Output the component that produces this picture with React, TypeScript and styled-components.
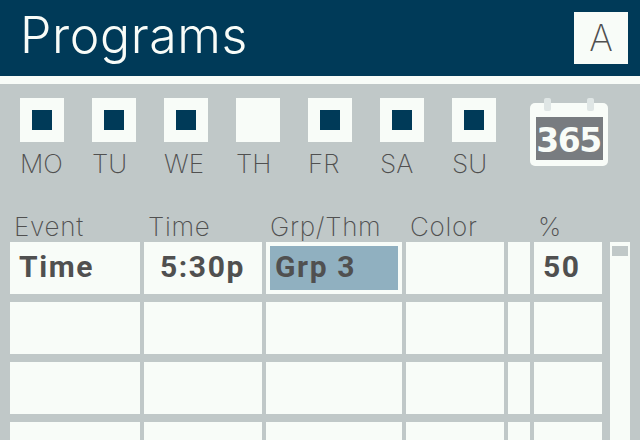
import React from "react";
import styled, { createGlobalStyle } from "styled-components";

const Global = createGlobalStyle`
  html, body { margin: 0; padding: 0; background: #c0c8c8; }
  #root { width: 640px; height: 440px; overflow: hidden; }
  * { box-sizing: border-box; }
`;

const Screen = styled.div`
  width: 640px;
  height: 440px;
  overflow: hidden;
  background: #c0c8c8;
  font-family: Inter, "Liberation Sans", Arial, sans-serif;
  font-weight: 250;
  color: #505050;
`;

const Header = styled.header`
  height: 84px;
  background: #003a58;
  border-bottom: 8px solid #f8fcf8;
  display: flex;
  align-items: flex-start;
  justify-content: space-between;
  padding: 12px 12px 0 20px;
`;

const Title = styled.h1`
  margin: 0;
  font-family: Inter, "Liberation Sans", Arial, sans-serif;
  font-weight: 300;
  font-size: 50px;
  line-height: 47px;
  letter-spacing: 0.6px;
  color: #f8fcf8;
`;

const AccessButton = styled.div`
  width: 54px;
  height: 52px;
  background: #f8fcf8;
  display: flex;
  align-items: center;
  justify-content: center;
  font-size: 36px;
  line-height: 1;
`;

const DaysRow = styled.section`
  display: flex;
  align-items: flex-start;
  padding: 14px 0 0 20px;
  height: 128px;
`;

const Days = styled.div`
  display: flex;
  gap: 28px;
`;

const Day = styled.div`
  width: 44px;
  display: flex;
  flex-direction: column;
  align-items: flex-start;
`;

const Check = styled.div`
  width: 44px;
  height: 44px;
  background: #f8fcf8;
  display: flex;
  align-items: center;
  justify-content: center;
`;

const Mark = styled.div`
  width: 20px;
  height: 20px;
  background: #003a58;
`;

const DayLabel = styled.span`
  font-size: 26px;
  line-height: 26px;
  margin-top: 9px;
  white-space: nowrap;
`;

const CalendarIcon = styled.svg`
  margin-left: 34px;
  flex: none;
`;

const TableArea = styled.section`
  display: flex;
  align-items: flex-start;
  padding-left: 10px;
  gap: 8px;
`;

const TableColumn = styled.div`
  width: 592px;
`;

const COLS = "130px 118px 136px 98px 22px 68px";

const HeadRow = styled.div`
  display: grid;
  grid-template-columns: ${COLS};
  column-gap: 4px;
  height: 30px;
`;

const HeadCell = styled.div<{ $pad: number }>`
  font-size: 26px;
  letter-spacing: 0.7px;
  line-height: 30px;
  padding-left: ${(p) => p.$pad}px;
  white-space: nowrap;
`;

const Row = styled.div`
  display: grid;
  grid-template-columns: ${COLS};
  column-gap: 4px;
  height: 52px;
  margin-bottom: 8px;
`;

const Cell = styled.div<{ $pad?: number }>`
  background: #f8fcf8;
  font-family: Roboto, "Liberation Sans", sans-serif;
  font-weight: 700;
  font-size: 30px;
  letter-spacing: 1.6px;
  line-height: 50px;
  padding-left: ${(p) => p.$pad ?? 0}px;
  white-space: nowrap;
`;

const SelectedCell = styled.div`
  background: #f8fcf8;
  padding: 4px;
`;

const Highlight = styled.div`
  height: 44px;
  background: #90b0c0;
  font-family: Roboto, "Liberation Sans", sans-serif;
  font-weight: 700;
  font-size: 30px;
  letter-spacing: 1.6px;
  line-height: 42px;
  padding-left: 5px;
  white-space: nowrap;
`;

const ScrollTrack = styled.div`
  width: 20px;
  height: 220px;
  margin-top: 30px;
  background: #f8fcf8;
  padding: 4px 2px;
`;

const ScrollThumb = styled.div`
  height: 10px;
  background: #c0c8c8;
`;

const days = [
  ["MO", true],
  ["TU", true],
  ["WE", true],
  ["TH", false],
  ["FR", true],
  ["SA", true],
  ["SU", true],
] as const;

const heads: [string, number][] = [
  ["Event", 4],
  ["Time", 4],
  ["Grp/Thm", 4],
  ["Color", 4],
  ["", 0],
  ["%", 4],
];

export default function App() {
  return (
    <Screen>
      <Global />
      <Header>
        <Title>Programs</Title>
        <AccessButton>A</AccessButton>
      </Header>
      <DaysRow>
        <Days>
          {days.map(([name, on]) => (
            <Day key={name}>
              <Check>{on && <Mark />}</Check>
              <DayLabel>{name}</DayLabel>
            </Day>
          ))}
        </Days>
        <CalendarIcon width="78" height="68" viewBox="0 0 78 68">
          <rect x="0" y="5" width="78" height="63" rx="5" fill="#f8fcf8" />
          <rect x="14" y="0" width="7" height="13" rx="2" fill="#dfe6e5" />
          <rect x="57" y="0" width="7" height="13" rx="2" fill="#dfe6e5" />
          <rect x="6" y="19" width="67" height="43" fill="#787c80" />
          <text
            x="38.5"
            y="54"
            textAnchor="middle"
            fontFamily="'DejaVu Sans', sans-serif"
            fontWeight="700"
            fontSize="33"
            letterSpacing="-1.5"
            fill="#f8fcf8"
          >
            365
          </text>
        </CalendarIcon>
      </DaysRow>
      <TableArea>
        <TableColumn>
          <HeadRow>
            {heads.map(([t, pad], i) => (
              <HeadCell key={i} $pad={pad}>
                {t}
              </HeadCell>
            ))}
          </HeadRow>
          <Row>
            <Cell $pad={9}>Time</Cell>
            <Cell $pad={16}>5:30p</Cell>
            <SelectedCell>
              <Highlight>Grp 3</Highlight>
            </SelectedCell>
            <Cell />
            <Cell />
            <Cell $pad={9}>50</Cell>
          </Row>
          {[0, 1, 2].map((r) => (
            <Row key={r}>
              {[0, 1, 2, 3, 4, 5].map((c) => (
                <Cell key={c} />
              ))}
            </Row>
          ))}
        </TableColumn>
        <ScrollTrack>
          <ScrollThumb />
        </ScrollTrack>
      </TableArea>
    </Screen>
  );
}
